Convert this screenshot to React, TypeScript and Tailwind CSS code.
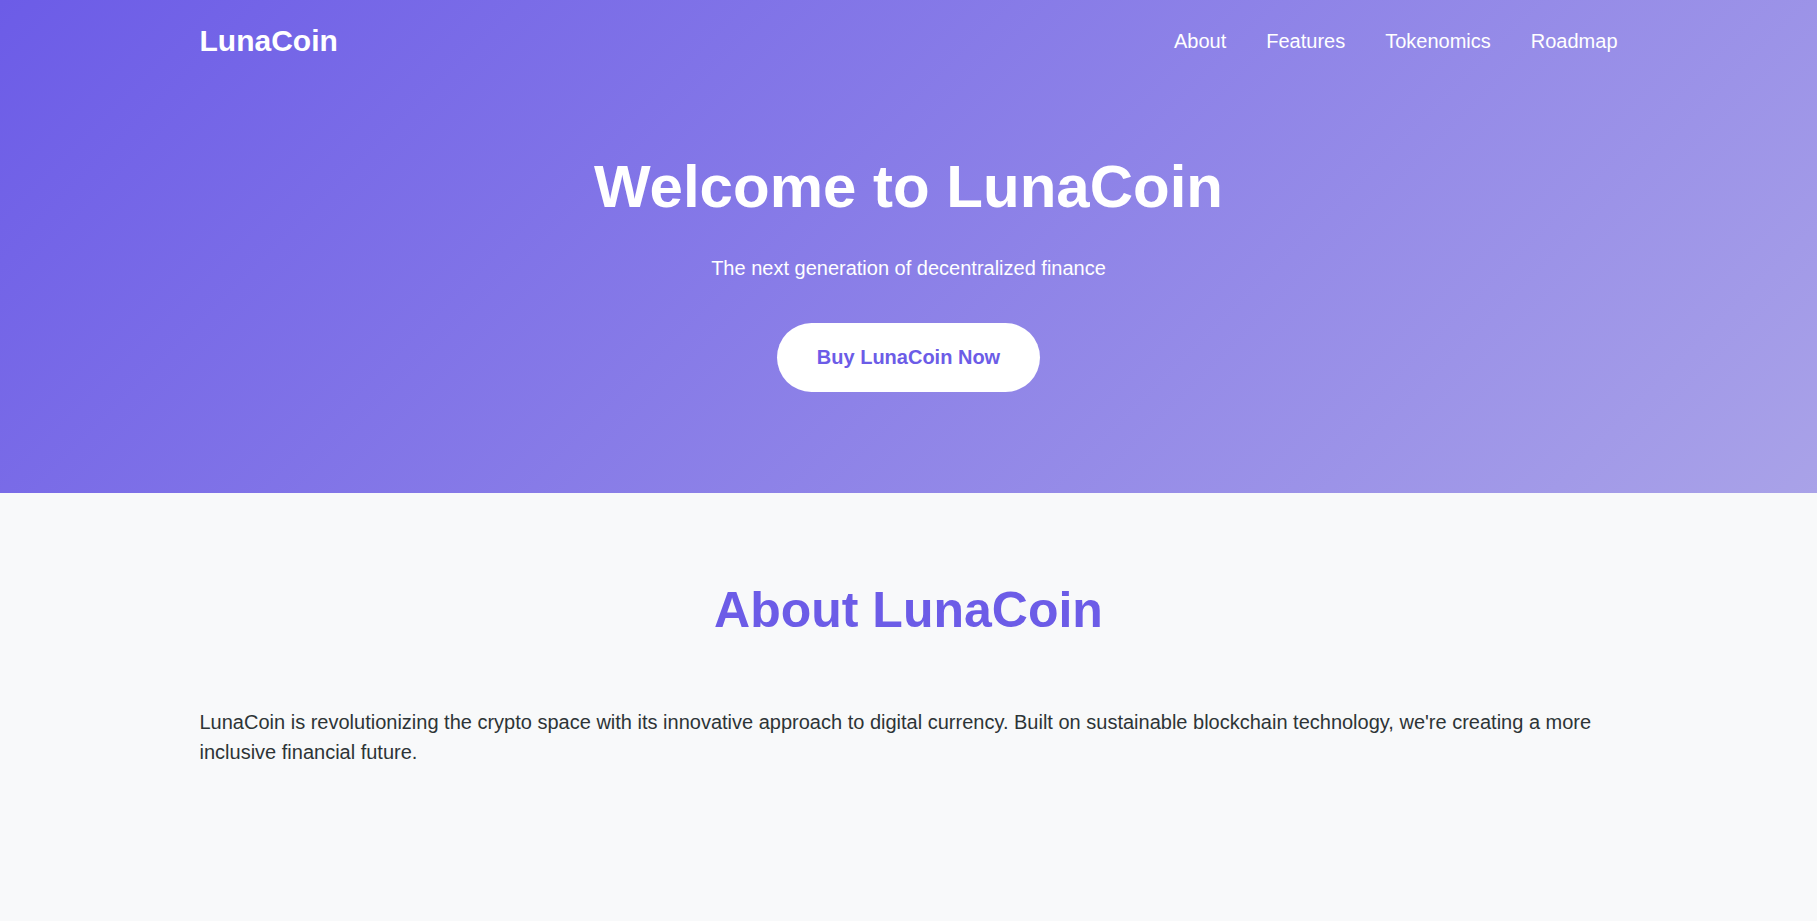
const navLinks = ['About', 'Features', 'Tokenomics', 'Roadmap'];

export default function App() {
  return (
    <div className="min-h-screen bg-[#f8f9fa] font-['Liberation_Sans',Arial,sans-serif] text-[#2d3436]">
      <header className="bg-[linear-gradient(135deg,#6c5ce7_0%,#a9a2e8_100%)] pb-[101px] text-white">
        <nav className="mx-auto flex h-[82px] w-full max-w-[1418px] items-center justify-between">
          <a href="#" className="text-[30px] font-bold leading-[34px]">
            LunaCoin
          </a>
          <ul className="mt-[2px] flex items-center gap-10">
            {navLinks.map((link) => (
              <li key={link}>
                <a href="#" className="text-[20px] leading-[23px]">
                  {link}
                </a>
              </li>
            ))}
          </ul>
        </nav>

        <div className="mx-auto mt-[69px] flex w-full max-w-[1418px] flex-col items-center text-center">
          <h1 className="text-[60px] font-bold leading-[72px]">Welcome to LunaCoin</h1>
          <p className="mt-[30px] text-[20px] leading-[30px]">The next generation of decentralized finance</p>
          <a
            href="#"
            className="mt-[40px] rounded-full bg-white px-10 py-[23px] text-[20px] font-bold leading-[23px] text-[#6c5ce7]"
          >
            Buy LunaCoin Now
          </a>
        </div>
      </header>

      <section className="mx-auto w-full max-w-[1418px] pt-[87px]">
        <h2 className="text-center text-[50px] font-bold leading-[60px] text-[#6c5ce7]">About LunaCoin</h2>
        <p className="mt-[67px] text-[20px] leading-[30px]">
          LunaCoin is revolutionizing the crypto space with its innovative approach to digital currency. Built on
          sustainable blockchain technology, we're creating a more inclusive financial future.
        </p>
      </section>
    </div>
  );
}
